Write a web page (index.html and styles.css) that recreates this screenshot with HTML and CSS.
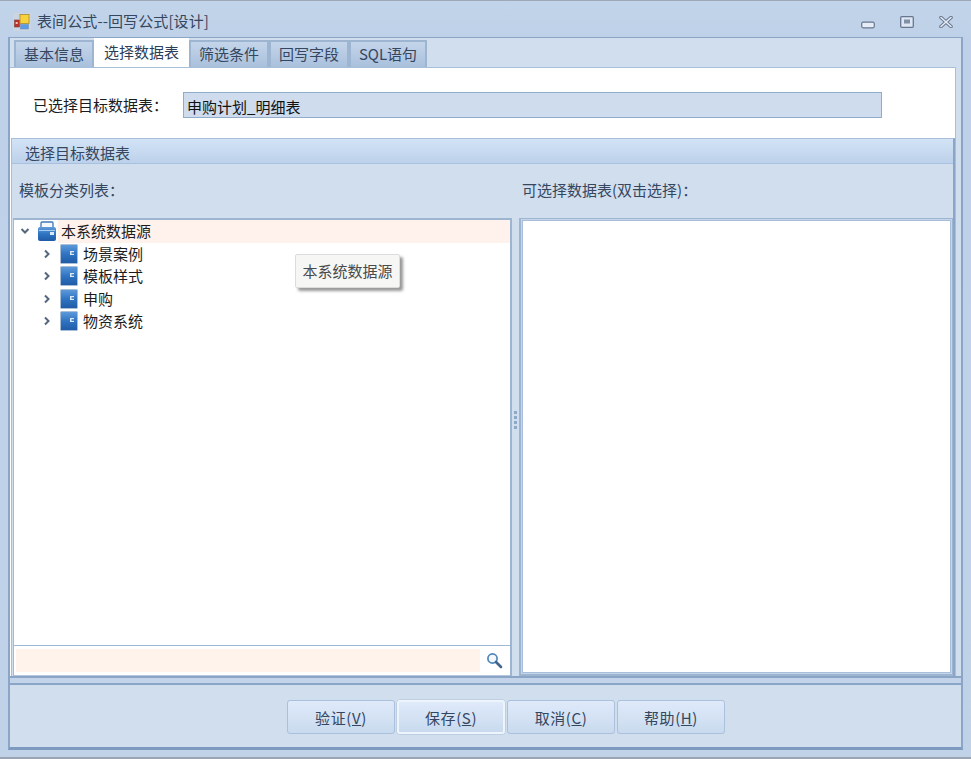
FILE: index.html
```html
<!DOCTYPE html>
<html lang="zh">
<head>
<meta charset="utf-8">
<title>表间公式--回写公式[设计]</title>
<link rel="stylesheet" href="styles.css">
</head>
<body>
<div class="window">
  <header class="titlebar">
    <svg class="app-icon" width="18" height="18" viewBox="0 0 18 18">
      <rect x="0" y="0" width="18" height="18" fill="#cbd5e2"/>
      <rect x="1.5" y="7" width="5" height="7" fill="#c0302a" stroke="#7e3a3a" stroke-width="0.6"/>
      <rect x="2.7" y="9" width="2" height="2" fill="#f0c0b0"/>
      <rect x="7" y="1.5" width="9" height="9" fill="#f8d23c" stroke="#a88a30" stroke-width="0.8"/>
      <rect x="7.5" y="11.5" width="8" height="4.5" fill="#5b9be6" stroke="#6f8fc0" stroke-width="0.6"/>
    </svg>
    <span class="title">表间公式--回写公式[设计]</span>
    <div class="win-buttons">
      <svg class="win-min" width="14" height="8" viewBox="0 0 14 8"><rect x="0.7" y="1.2" width="12.6" height="5.6" rx="1.5" fill="#e6edf6" stroke="#68778f" stroke-width="1.2"/></svg>
      <svg width="14" height="12" viewBox="0 0 14 12"><rect x="0.7" y="0.7" width="12.6" height="10.6" rx="1" fill="#dde6f2" stroke="#68778f" stroke-width="1.3"/><rect x="4" y="3.5" width="6" height="4" fill="#8090a8"/></svg>
      <svg width="14" height="12" viewBox="0 0 14 12"><path d="M2 1.5 L12 10.5 M12 1.5 L2 10.5" stroke="#68778f" stroke-width="3.6" stroke-linecap="round"/><path d="M2 1.5 L12 10.5 M12 1.5 L2 10.5" stroke="#e6edf6" stroke-width="1.6" stroke-linecap="round"/></svg>
    </div>
  </header>

  <main class="frame">
    <div class="tabstrip">
      <div class="tab">基本信息</div>
      <div class="tab tab-active">选择数据表</div>
      <div class="tab">筛选条件</div>
      <div class="tab">回写字段</div>
      <div class="tab tab-last">SQL语句</div>
    </div>

    <section class="tab-page">
      <div class="target-row">
        <span class="target-label">已选择目标数据表：</span>
        <div class="target-field">申购计划_明细表</div>
      </div>

      <div class="group">
        <div class="group-head">选择目标数据表</div>
        <div class="group-body">
          <div class="pane-labels">
            <div class="pane-label">模板分类列表：</div>
            <div class="pane-label pane-label-right">可选择数据表(双击选择)：</div>
          </div>
          <div class="panes">
            <div class="left-pane">
              <div class="tree">
                <div class="node node-root">
                  <svg class="chev" width="10" height="10" viewBox="0 0 10 10"><path d="M1.5 3 L5 6.5 L8.5 3" fill="none" stroke="#56667f" stroke-width="2"/></svg>
                  <svg class="db-icon" width="20" height="21" viewBox="0 0 20 21">
                    <defs><linearGradient id="book" x1="0" y1="0" x2="0" y2="1"><stop offset="0" stop-color="#5f9bdb"/><stop offset="0.5" stop-color="#2f74c2"/><stop offset="1" stop-color="#1f5aa6"/></linearGradient></defs>
                    <path d="M4 7 V2 Q4 1 5 1 H15 Q16 1 16 2 V7" fill="#f4f8fc" stroke="#3b78b8" stroke-width="1.3"/>
                    <rect x="1" y="6" width="18" height="14" rx="2" fill="url(#book)"/>
                    <rect x="2" y="9" width="16" height="1" fill="#a9cbec"/>
                    <rect x="13" y="11" width="4" height="3" fill="#dbe8f6"/>
                  </svg>
                  <span class="node-text">本系统数据源</span>
                </div>
                <div class="node node-child">
                  <svg class="chev" width="10" height="10" viewBox="0 0 10 10"><path d="M3 1.5 L6.5 5 L3 8.5" fill="none" stroke="#56667f" stroke-width="2"/></svg>
                  <svg class="db-icon" width="18" height="20" viewBox="0 0 18 20"><rect x="0.5" y="0.5" width="17" height="19" rx="1" fill="url(#book)" stroke="#a9bdd4"/><rect x="10" y="7" width="4" height="4" fill="#dbe8f6"/><rect x="11.5" y="8.3" width="2.5" height="1.5" fill="#2a6fbd"/></svg>
                  <span class="node-text">场景案例</span>
                </div>
                <div class="node node-child">
                  <svg class="chev" width="10" height="10" viewBox="0 0 10 10"><path d="M3 1.5 L6.5 5 L3 8.5" fill="none" stroke="#56667f" stroke-width="2"/></svg>
                  <svg class="db-icon" width="18" height="20" viewBox="0 0 18 20"><rect x="0.5" y="0.5" width="17" height="19" rx="1" fill="url(#book)" stroke="#a9bdd4"/><rect x="10" y="7" width="4" height="4" fill="#dbe8f6"/><rect x="11.5" y="8.3" width="2.5" height="1.5" fill="#2a6fbd"/></svg>
                  <span class="node-text">模板样式</span>
                </div>
                <div class="node node-child">
                  <svg class="chev" width="10" height="10" viewBox="0 0 10 10"><path d="M3 1.5 L6.5 5 L3 8.5" fill="none" stroke="#56667f" stroke-width="2"/></svg>
                  <svg class="db-icon" width="18" height="20" viewBox="0 0 18 20"><rect x="0.5" y="0.5" width="17" height="19" rx="1" fill="url(#book)" stroke="#a9bdd4"/><rect x="10" y="7" width="4" height="4" fill="#dbe8f6"/><rect x="11.5" y="8.3" width="2.5" height="1.5" fill="#2a6fbd"/></svg>
                  <span class="node-text">申购</span>
                </div>
                <div class="node node-child">
                  <svg class="chev" width="10" height="10" viewBox="0 0 10 10"><path d="M3 1.5 L6.5 5 L3 8.5" fill="none" stroke="#56667f" stroke-width="2"/></svg>
                  <svg class="db-icon" width="18" height="20" viewBox="0 0 18 20"><rect x="0.5" y="0.5" width="17" height="19" rx="1" fill="url(#book)" stroke="#a9bdd4"/><rect x="10" y="7" width="4" height="4" fill="#dbe8f6"/><rect x="11.5" y="8.3" width="2.5" height="1.5" fill="#2a6fbd"/></svg>
                  <span class="node-text">物资系统</span>
                </div>
                <div class="tooltip">本系统数据源</div>
              </div>
              <div class="search-row">
                <div class="search-input"></div>
                <svg class="search-icon" width="17" height="17" viewBox="0 0 17 17"><circle cx="6.5" cy="6.5" r="4.6" fill="#f4f8fc" stroke="#4f86b8" stroke-width="1.7"/><path d="M10 10 L15 15" stroke="#44658c" stroke-width="2.6" stroke-linecap="round"/></svg>
              </div>
            </div>
            <div class="splitter"><i></i><i></i><i></i><i></i></div>
            <div class="right-pane"><div class="right-list"></div></div>
          </div>
        </div>
      </div>
    </section>
  </main>

  <div class="strip"></div>

  <footer class="footer">
    <button class="btn">验证(<u>V</u>)</button>
    <button class="btn btn-focus">保存(<u>S</u>)</button>
    <button class="btn">取消(<u>C</u>)</button>
    <button class="btn">帮助(<u>H</u>)</button>
  </footer>
</div>
</body>
</html>
```

FILE: styles.css
```css
* { box-sizing: border-box; }
html, body { margin: 0; padding: 0; }
body {
  width: 971px;
  height: 759px;
  overflow: hidden;
  font-family: "Noto Sans CJK SC", "Noto Sans", sans-serif;
  font-size: 15px;
  color: #1c1c1c;
}
.window {
  width: 971px;
  height: 759px;
  display: flex;
  flex-direction: column;
  padding: 0 8px 7px;
  background: linear-gradient(#c2d4e9, #bed1e8 40px, #bfd2e8);
  border-top: 1px solid #9ea8b6;
  border-bottom: 2px solid #9aa4b2;
}
.titlebar {
  height: 36px;
  flex: none;
  display: flex;
  align-items: center;
  padding: 0 0 0 5px;
}
.app-icon { flex: none; margin-top: 5px; }
.title {
  margin-left: 6px;
  margin-top: 3px;
  color: #35465f;
  font-size: 15px;
  line-height: 20px;
  letter-spacing: 0.1px;
}
.win-buttons {
  margin-left: auto;
  margin-right: 10px;
  display: flex;
  align-items: center;
  gap: 25px;
  margin-top: 5px;
}
.win-min { margin-top: 6px; }
.frame {
  flex: none;
  height: 641px;
  display: flex;
  flex-direction: column;
  background: #d0deee;
  border: 2px solid #8aa5c5;
  border-top: 1px solid #8aa5c5;
  padding: 1px 5px 0 0;
}
.tabstrip {
  height: 28px;
  flex: none;
  display: flex;
  align-items: flex-end;
  padding-left: 4px;
  position: relative;
  z-index: 1;
}
.tab {
  height: 27px;
  width: 80px;
  text-align: center;
  line-height: 24px;
  color: #35465f;
  background: linear-gradient(#c4d5ea, #a9c0dc);
  border: 2px solid #9db5d1;
  border-bottom: 0;
  font-size: 15px;
}
.tab-active {
  width: 95px;
  height: 29px;
  background: #fff;
  border: 0;
  line-height: 27px;
  color: #2c3e58;
}
.tab-last { width: 78px; }
.tab-page {
  flex: 1;
  min-height: 0;
  display: flex;
  flex-direction: column;
  background: #fff;
  border-top: 1px solid #a8bfda;
  border-right: 1px solid #a8bfda;
}
.target-row {
  height: 70px;
  flex: none;
  display: flex;
  align-items: center;
  padding: 4px 0 0 23px;
}
.target-label {
  width: 150px;
  flex: none;
  color: #1c1c1c;
  line-height: 20px;
}
.target-field {
  width: 699px;
  height: 26px;
  background: #cedced;
  border: 1px solid #92abc9;
  line-height: 27px;
  padding-left: 3px;
  color: #111;
}
.group {
  flex: 1;
  min-height: 0;
  margin-left: 1px;
  display: flex;
  flex-direction: column;
  background: #d0deee;
  border: 1px solid #a8bfda;
  border-right: 2px solid #8aa5c5;
  border-bottom: 0;
}
.group-head {
  height: 25px;
  flex: none;
  background: linear-gradient(#d3e3f6, #bcd1ea);
  border-bottom: 1px solid #a9c0de;
  line-height: 27px;
  padding-left: 13px;
  color: #35465f;
}
.group-body {
  flex: 1;
  min-height: 0;
  display: flex;
  flex-direction: column;
}
.pane-labels {
  height: 54px;
  flex: none;
  display: flex;
  align-items: center;
  color: #35465f;
  padding-bottom: 2px;
}
.pane-label { width: 503px; padding-left: 7px; line-height: 20px; }
.pane-label-right { width: auto; padding-left: 7px; }
.panes {
  flex: 1;
  min-height: 0;
  display: flex;
  padding-left: 1px;
}
.left-pane {
  width: 499px;
  flex: none;
  display: flex;
  flex-direction: column;
  background: #fff;
  border: 1px solid #a3bad6;
  border-top: 2px solid #9db5d1;
  border-right: 2px solid #9db5d1;
  border-bottom: 0;
}
.tree {
  flex: 1;
  min-height: 0;
  position: relative;
  border-bottom: 1px solid #9fb7d4;
}
.node {
  height: 22.5px;
  display: flex;
  align-items: center;
  white-space: nowrap;
}
.node-root {
  background: linear-gradient(to right, #fff 0, #fff 44px, #fff2ec 44px);
  padding-left: 6px;
}
.node-child { padding-left: 28px; }
.chev { flex: none; }
.node-root .db-icon { margin-left: 7px; }
.node-child .db-icon { margin-left: 8px; }
.node-text { margin-left: 5px; color: #1c1c1c; line-height: 20px; }
.node-root .node-text { margin-left: 4px; }
.tooltip {
  position: absolute;
  left: 281px;
  top: 34px;
  width: 105px;
  height: 34px;
  background: #f6f6f4;
  border: 1px solid #dcdcdc;
  border-radius: 2px;
  box-shadow: 3px 3px 3px rgba(70, 70, 70, 0.55);
  text-align: center;
  line-height: 31px;
  color: #4a4a4a;
}
.search-row {
  height: 30px;
  flex: none;
  display: flex;
  align-items: center;
  padding: 0 7px 0 2px;
  border-bottom: 1px solid #b3c6de;
}
.search-input {
  width: 464px;
  height: 23px;
  background: #fff3ec;
}
.search-icon { margin-left: auto; }
.splitter {
  width: 7px;
  flex: none;
  display: flex;
  flex-direction: column;
  align-items: center;
  justify-content: center;
  gap: 2px;
  padding-bottom: 55px;
}
.splitter i {
  display: block;
  width: 3px;
  height: 3px;
  background: #8ea8c8;
}
.right-pane {
  flex: 1;
  min-width: 0;
  padding: 1px;
  background: #c5d6ea;
  border: 1px solid #9db5d1;
  border-left-width: 2px;
  border-bottom-width: 2px;
}
.right-list {
  height: 100%;
  background: #fff;
  border: 1px solid #a8bedb;
}
.strip {
  height: 5px;
  flex: none;
  background: #c3d4ea;
  border-left: 2px solid #8aa5c5;
  border-right: 2px solid #8aa5c5;
}
.footer {
  flex: 1;
  min-height: 0;
  display: flex;
  align-items: center;
  gap: 2px;
  padding: 2px 0 0 277px;
  background: #d0deee;
  border: 2px solid #8aa5c5;
  border-bottom: 3px solid #7e9abe;
}
.btn {
  width: 108px;
  height: 34px;
  padding: 0;
  font-family: inherit;
  font-size: 15px;
  letter-spacing: 0.6px;
  color: #35465f;
  background: linear-gradient(#dfeafa, #c9daee);
  border: 1px solid #abc0da;
  border-radius: 3px;
}
.btn-focus {
  border: 2px solid #eef4fb;
  box-shadow: 0 0 0 0.5px #abc0da;
}
```
